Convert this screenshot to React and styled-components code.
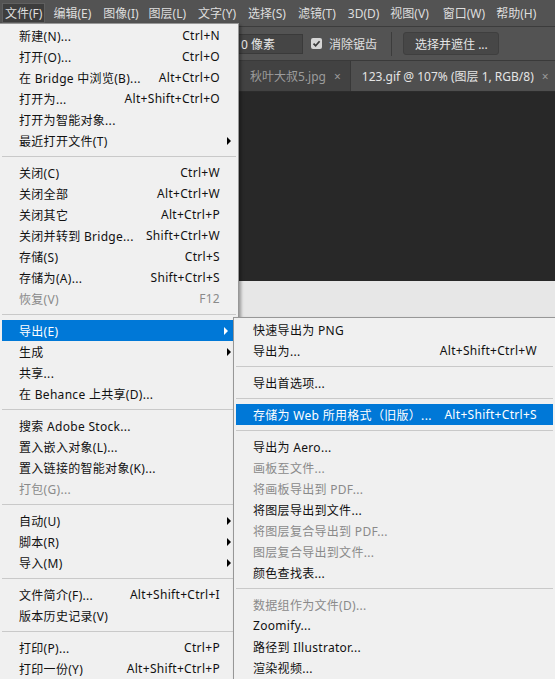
import React from "react";
import styled, { createGlobalStyle } from "styled-components";

const Global = createGlobalStyle`
  html, body { margin: 0; padding: 0; overflow: hidden; }
  body { width: 555px; height: 679px; background: #282828; }
  * { box-sizing: border-box; }
`;

const FONT = `"Noto Sans", "Noto Sans CJK SC", sans-serif`;

const Screen = styled.div`
  position: relative;
  width: 555px;
  height: 679px;
  overflow: hidden;
  display: flex;
  flex-direction: column;
  font-family: ${FONT};
  font-size: 12px;
`;

const MenuBar = styled.div`
  height: 27px;
  background: #535353;
  border-bottom: 1px solid #3c3c3c;
  display: flex;
  align-items: center;
  padding-left: 2px;
  color: #dedede;
`;

const MenuBarItem = styled.div`
  height: 20px;
  display: flex;
  align-items: center;
  padding: 0 ${(p) => (p.$open ? "2px" : "3px")};
  margin-right: ${(p) => p.$mr}px;
  background: ${(p) => (p.$open ? "#3d3d3d" : "transparent")};
  border: 1px solid ${(p) => (p.$open ? "#5f5f5f" : "transparent")};
  white-space: nowrap;
`;

const OptionsBar = styled.div`
  height: 34px;
  background: #535353;
  border-bottom: 1px solid #3a3a3a;
  display: flex;
  align-items: center;
  padding-left: 232px;
  color: #e0e0e0;
`;

const NumInput = styled.div`
  width: 71px;
  height: 20px;
  background: #454545;
  border: 1px solid #3a3a3a;
  display: flex;
  align-items: center;
  padding-left: 8px;
  color: #e6e6e6;
`;

const CheckLabel = styled.div`
  display: flex;
  align-items: center;
  gap: 7px;
  margin-left: 8px;
`;

const CheckBox = styled.div`
  width: 11px;
  height: 11px;
  border-radius: 2px;
  background: #d6d6d6;
  display: flex;
  align-items: center;
  justify-content: center;
`;

const VSep = styled.div`
  width: 1px;
  height: 24px;
  background: #3c3c3c;
  margin-left: 14px;
  margin-right: 11px;
`;

const OptButton = styled.div`
  width: 96px;
  height: 23px;
  border-radius: 3px;
  background: #474747;
  border: 1px solid #3f3f3f;
  display: flex;
  align-items: center;
  padding-left: 11px;
  color: #e6e6e6;
`;

const TabBar = styled.div`
  height: 31px;
  background: #424242;
  display: flex;
  align-items: stretch;
  padding-left: 239px;
  border-bottom: 1px solid #2c2c2c;
`;

const Tab = styled.div`
  display: flex;
  align-items: center;
  padding: 0 9px 0 11px;
  background: ${(p) => (p.$active ? "#4f4f4f" : "#424242")};
  color: ${(p) => (p.$active ? "#e4e4e4" : "#9c9c9c")};
  border-right: 1px solid #383838;
  white-space: nowrap;
`;

const TabClose = styled.span`
  margin-left: 8px;
  color: #9a9a9a;
  font-size: 12px;
`;

const Canvas = styled.div`
  height: 189px;
  background: #282828;
`;

const LightPanel = styled.div`
  flex: 1;
  background: #e7e7e7;
`;

const Menu = styled.div`
  position: absolute;
  top: ${(p) => p.$top}px;
  left: ${(p) => p.$left}px;
  width: ${(p) => p.$width}px;
  background: #f0f0f0;
  border: 1px solid #979797;
  padding: 1px 2px 2px;
  box-shadow: 2px 2px 3px rgba(0, 0, 0, 0.35);
  font-family: ${FONT};
  font-size: 12px;
  letter-spacing: 0.3px;
`;

const Item = styled.div`
  height: 21px;
  display: grid;
  grid-template-columns: 1fr auto 16px;
  align-items: center;
  padding-left: 17px;
  white-space: nowrap;
  background: ${(p) => (p.$active ? "#0078d7" : "transparent")};
  color: ${(p) => (p.$active ? "#ffffff" : p.$disabled ? "#8a8a8a" : "#111111")};
  margin-right: ${(p) => (p.$active && p.$trim ? 3 : 0)}px;
`;

const Shortcut = styled.span`
  text-align: right;
`;

const Arrow = styled.span`
  width: 0;
  height: 0;
  margin-left: 7px;
  border-left: 4px solid ${(p) => (p.$active ? "#ffffff" : "#000000")};
  border-top: 4px solid transparent;
  border-bottom: 4px solid transparent;
`;

const Sep = styled.div`
  height: 11px;
  display: flex;
  align-items: center;
  &::after {
    content: "";
    display: block;
    width: 100%;
    height: 1px;
    background: #c9c9c9;
  }
`;

const mainItems = [
  { l: "新建(N)...", s: "Ctrl+N" },
  { l: "打开(O)...", s: "Ctrl+O" },
  { l: "在 Bridge 中浏览(B)...", s: "Alt+Ctrl+O" },
  { l: "打开为...", s: "Alt+Shift+Ctrl+O" },
  { l: "打开为智能对象..." },
  { l: "最近打开文件(T)", a: true },
  "sep",
  { l: "关闭(C)", s: "Ctrl+W" },
  { l: "关闭全部", s: "Alt+Ctrl+W" },
  { l: "关闭其它", s: "Alt+Ctrl+P" },
  { l: "关闭并转到 Bridge...", s: "Shift+Ctrl+W" },
  { l: "存储(S)", s: "Ctrl+S" },
  { l: "存储为(A)...", s: "Shift+Ctrl+S" },
  { l: "恢复(V)", s: "F12", d: true },
  "sep",
  { l: "导出(E)", a: true, act: true },
  { l: "生成", a: true },
  { l: "共享..." },
  { l: "在 Behance 上共享(D)..." },
  "sep",
  { l: "搜索 Adobe Stock..." },
  { l: "置入嵌入对象(L)..." },
  { l: "置入链接的智能对象(K)..." },
  { l: "打包(G)...", d: true },
  "sep",
  { l: "自动(U)", a: true },
  { l: "脚本(R)", a: true },
  { l: "导入(M)", a: true },
  "sep",
  { l: "文件简介(F)...", s: "Alt+Shift+Ctrl+I" },
  { l: "版本历史记录(V)" },
  "sep",
  { l: "打印(P)...", s: "Ctrl+P" },
  { l: "打印一份(Y)", s: "Alt+Shift+Ctrl+P" },
];

const subItems = [
  { l: "快速导出为 PNG" },
  { l: "导出为...", s: "Alt+Shift+Ctrl+W" },
  "sep",
  { l: "导出首选项..." },
  "sep",
  { l: "存储为 Web 所用格式（旧版）...", s: "Alt+Shift+Ctrl+S", act: true },
  "sep",
  { l: "导出为 Aero..." },
  { l: "画板至文件...", d: true },
  { l: "将画板导出到 PDF...", d: true },
  { l: "将图层导出到文件..." },
  { l: "将图层复合导出到 PDF...", d: true },
  { l: "图层复合导出到文件...", d: true },
  { l: "颜色查找表..." },
  "sep",
  { l: "数据组作为文件(D)...", d: true },
  { l: "Zoomify..." },
  { l: "路径到 Illustrator..." },
  { l: "渲染视频..." },
];

function MenuList({ items, trim }) {
  return items.map((it, i) =>
    it === "sep" ? (
      <Sep key={i} />
    ) : (
      <Item key={i} $active={it.act} $disabled={it.d} $trim={trim}>
        <span>{it.l}</span>
        <Shortcut>{it.s || ""}</Shortcut>
        {it.a ? <Arrow $active={it.act} /> : <span />}
      </Item>
    )
  );
}

const bar = [
  ["文件(F)", 4, true],
  ["编辑(E)", 4],
  ["图像(I)", 2],
  ["图层(L)", 4],
  ["文字(Y)", 4],
  ["选择(S)", 4],
  ["滤镜(T)", 4],
  ["3D(D)", 3],
  ["视图(V)", 6],
  ["窗口(W)", 3],
  ["帮助(H)", 0],
];

export default function App() {
  return (
    <>
      <Global />
      <Screen>
        <MenuBar>
          {bar.map(([t, mr, open]) => (
            <MenuBarItem key={t} $open={open} $mr={mr}>
              {t}
            </MenuBarItem>
          ))}
        </MenuBar>
        <OptionsBar>
          <NumInput>0 像素</NumInput>
          <CheckLabel>
            <CheckBox>
              <svg width="9" height="9" viewBox="0 0 9 9">
                <path d="M1.5 4.6 L3.6 6.7 L7.6 2.2" fill="none" stroke="#3a3a3a" strokeWidth="1.7" />
              </svg>
            </CheckBox>
            消除锯齿
          </CheckLabel>
          <VSep />
          <OptButton>选择并遮住 ...</OptButton>
        </OptionsBar>
        <TabBar>
          <Tab>
            秋叶大叔5.jpg<TabClose>×</TabClose>
          </Tab>
          <Tab $active>
            123.gif @ 107% (图层 1, RGB/8)<TabClose>×</TabClose>
          </Tab>
        </TabBar>
        <Canvas />
        <LightPanel />

        <Menu $top={23} $left={-1} $width={240}>
          <MenuList items={mainItems} trim />
        </Menu>
        <Menu $top={317} $left={233} $width={323}>
          <MenuList items={subItems} />
        </Menu>
      </Screen>
    </>
  );
}
